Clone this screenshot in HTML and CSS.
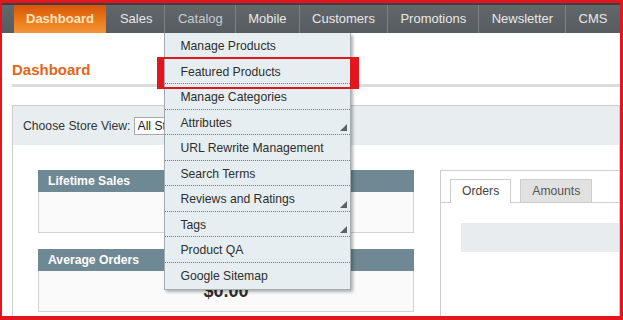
FILE: index.html
```html
<!DOCTYPE html>
<html>
<head>
<meta charset="utf-8">
<link rel="stylesheet" href="styles.css">
</head>
<body>
<div class="frame">
  <div class="topline"></div>
  <ul class="nav">
    <li class="nav-item active">Dashboard</li>
    <li class="nav-item">Sales</li>
    <li class="nav-item open">Catalog
      <ul class="menu">
        <li class="menu-item">Manage Products</li>
        <li class="menu-item">Featured Products</li>
        <li class="menu-item">Manage Categories</li>
        <li class="menu-item parent">Attributes<svg class="grip" width="7" height="7" viewBox="0 0 7 7"><polygon points="7,0 7,7 0,7" fill="#5a6266"/></svg></li>
        <li class="menu-item">URL Rewrite Management</li>
        <li class="menu-item">Search Terms</li>
        <li class="menu-item parent">Reviews and Ratings<svg class="grip" width="7" height="7" viewBox="0 0 7 7"><polygon points="7,0 7,7 0,7" fill="#5a6266"/></svg></li>
        <li class="menu-item parent">Tags<svg class="grip" width="7" height="7" viewBox="0 0 7 7"><polygon points="7,0 7,7 0,7" fill="#5a6266"/></svg></li>
        <li class="menu-item">Product QA</li>
        <li class="menu-item">Google Sitemap</li>
      </ul>
    </li>
    <li class="nav-item">Mobile</li>
    <li class="nav-item">Customers</li>
    <li class="nav-item">Promotions</li>
    <li class="nav-item">Newsletter</li>
    <li class="nav-item">CMS</li>
  </ul>
  <div class="content">
    <h1 class="title">Dashboard</h1>
    <div class="rule"></div>
    <div class="panel">
      <div class="store-bar">
        <span class="store-label">Choose Store View:</span>
        <span class="select"><span class="select-text">All Store Views</span></span>
      </div>
      <div class="columns">
        <div class="left-col">
          <div class="stat">
            <div class="stat-head">Lifetime Sales</div>
            <div class="stat-body"></div>
          </div>
          <div class="stat">
            <div class="stat-head">Average Orders</div>
            <div class="stat-body"><span class="stat-value">$0.00</span></div>
          </div>
        </div>
        <div class="right-col">
          <div class="tabs">
            <span class="tab tab-active">Orders</span>
            <span class="tab">Amounts</span>
          </div>
          <div class="chart-bar"></div>
        </div>
      </div>
    </div>
  </div>
  <div class="highlight"></div>
</div>
</body>
</html>
```
FILE: styles.css
```css
* { box-sizing: border-box; }
html, body { margin: 0; padding: 0; }
body {
  font-family: "Liberation Sans", Arial, sans-serif;
  background: #fff;
}
.frame {
  position: relative;
  width: 623px;
  height: 320px;
  overflow: hidden;
  border-style: solid;
  border-color: #e4161d;
  border-width: 3px 3px 4px 2px;
  background: #fff;
}
.topline {
  height: 2px;
  background: #3b4044;
}
.nav {
  list-style: none;
  margin: 0;
  padding: 0 0 0 12px;
  height: 28px;
  background: linear-gradient(#61676b, #575c60);
  display: flex;
  align-items: stretch;
}
.nav-item {
  position: relative;
  padding: 0 12px 0 12.5px;
  font-size: 13px;
  line-height: 28px;
  color: #e8e8e8;
  border-left: 1px solid #7d8387;
  white-space: nowrap;
}
.nav-item.active {
  padding: 0 12px;
  border-left: none;
  font-weight: bold;
  color: #fde4c4;
  background: linear-gradient(#d5550b, #ec7a17 55%, #f2953a);
}
.nav-item.active + .nav-item { border-left: none; padding-left: 14px; }
.nav-item.open { color: #c3cbcf; }
.menu {
  position: absolute;
  left: -1px;
  top: 28px;
  z-index: 5;
  width: 187px;
  margin: 0;
  padding: 0 0 1px;
  list-style: none;
  background: #e7eef1;
  border: 1px solid #a3acb1;
  border-top: none;
  box-shadow: 2px 2px 3px rgba(0, 0, 0, 0.3);
}
.menu-item {
  position: relative;
  height: 25.55px;
  padding: 1px 0 0 15px;
  font-size: 12.2px;
  line-height: 25px;
  color: #2e2e2e;
  border-bottom: 1px dotted #6d7d84;
}
.menu-item:last-child { border-bottom: none; }
.grip {
  position: absolute;
  right: 3px;
  bottom: 3px;
}
.content {
  padding-left: 10px;
}
.title {
  margin: 28px 0 0;
  font-size: 15px;
  line-height: 18px;
  font-weight: bold;
  color: #e1661a;
}
.rule {
  margin-top: 5px;
  height: 3px;
  background: #dcdcdc;
}
.panel {
  margin-top: 18px;
  border: 1px solid #cdcdcd;
  height: 240px;
}
.store-bar {
  height: 39px;
  background: #e8eef0;
  display: flex;
  align-items: center;
  padding-left: 10px;
  font-size: 12.2px;
  color: #333;
}
.select {
  margin-left: 3px;
  height: 18px;
  line-height: 16px;
  padding: 0 3px;
  border: 1px solid #a9a9a9;
  background: #fff;
  color: #222;
  width: 120px;
}
.select-text {
  display: block;
  width: 26px;
  overflow: hidden;
  white-space: nowrap;
}
.columns {
  display: flex;
  padding: 25px 0 0 25px;
  gap: 26px;
}
.left-col {
  width: 376px;
  display: flex;
  flex-direction: column;
  gap: 16px;
}
.stat-head {
  height: 22px;
  line-height: 22px;
  padding-left: 10px;
  background: #6e8993;
  color: #fff;
  font-weight: bold;
  font-size: 12.2px;
}
.stat-body {
  height: 41px;
  border: 1px solid #d3d3d3;
  border-top: none;
  background: #fafafa;
  display: flex;
  align-items: center;
  justify-content: center;
}
.stat-value {
  font-size: 18px;
  font-weight: bold;
  color: #2e2e2e;
}
.right-col {
  flex: 1;
  height: 200px;
  border-top: 1px solid #cdcdcd;
  border-left: 1px solid #cdcdcd;
}
.tabs {
  display: flex;
  gap: 9px;
  padding: 8px 0 0 9px;
  border-bottom: 1px solid #cdcdcd;
}
.tab {
  height: 23px;
  line-height: 22px;
  padding: 0 11px;
  font-size: 12.2px;
  color: #555;
  background: #e1e1e1;
  border: 1px solid #cdcdcd;
  border-bottom: none;
}
.tab-active {
  background: #fff;
  color: #444;
  margin-bottom: -1px;
  height: 24px;
}
.chart-bar {
  margin: 20px 0 0 20px;
  height: 29px;
  background: #e8ecee;
}
.highlight {
  position: absolute;
  left: 155px;
  top: 54px;
  width: 202px;
  height: 32px;
  z-index: 10;
  border-style: solid;
  border-color: #e4161d;
  border-width: 2px 9px 2px 7px;
}
```
